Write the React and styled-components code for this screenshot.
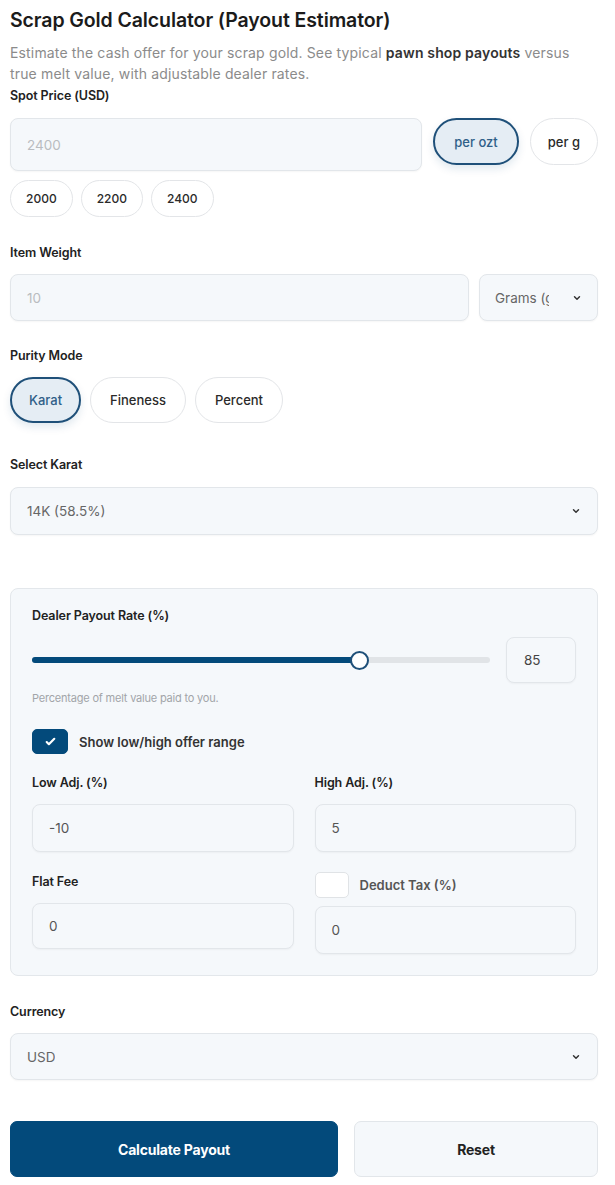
import React from "react";
import styled, { createGlobalStyle } from "styled-components";

const Global = createGlobalStyle`
  html, body { margin: 0; padding: 0; background: #fff; }
  body { font-family: Inter, "Noto Sans", Arial, sans-serif; color: #1c1c1c; }
  * { box-sizing: border-box; }
`;

const PRIMARY = "#034a7b";

const Page = styled.div`
  padding: 6px 17px 9px 10px;
  display: flex;
  flex-direction: column;
`;

const Title = styled.h1`
  margin: 0;
  font-size: 19.5px;
  line-height: 28px;
  font-weight: 600;
  color: #1b1b1b;
  letter-spacing: -0.1px;
`;

const Desc = styled.p`
  margin: 8px 0 0;
  max-width: 588px;
  font-size: 14px;
  line-height: 21px;
  color: #8b8b8b;
  letter-spacing: 0.15px;
  b { color: #333; font-weight: 600; }
`;

const Label = styled.div`
  font-size: 12.5px;
  line-height: 18px;
  font-weight: 600;
  color: #222;
  margin-top: ${(p) => p.$mt || 0}px;
  letter-spacing: -0.1px;
`;

const Row = styled.div`
  display: flex;
  align-items: flex-start;
  gap: ${(p) => p.$gap || 10}px;
  margin-top: ${(p) => p.$mt || 0}px;
`;

const Field = styled.div`
  flex: 1;
  height: ${(p) => p.$h || 48}px;
  background: #f5f8fb;
  border: 1px solid #e2e6ea;
  border-radius: 8px;
  display: flex;
  align-items: center;
  padding: 0 ${(p) => p.$px || 16}px;
  font-size: 13.5px;
  color: ${(p) => (p.$ph ? "#b9bcc0" : "#555")};
  box-shadow: 0 1px 2px rgba(0, 0, 0, 0.04);
`;

const SelectBox = styled(Field)`
  flex: ${(p) => (p.$w ? `0 0 ${p.$w}px` : 1)};
  justify-content: space-between;
  color: #666;
  overflow: hidden;
  white-space: nowrap;
`;

const SelectText = styled.span`
  overflow: hidden;
  max-width: ${(p) => (p.$clip ? `${p.$clip}px` : "none")};
`;

const Pill = styled.button`
  font-family: inherit;
  height: ${(p) => p.$h || 46}px;
  padding: 0 ${(p) => p.$px || 17}px;
  border-radius: 999px;
  font-size: ${(p) => p.$fs || 13}px;
  font-weight: 500;
  cursor: pointer;
  background: ${(p) => (p.$active ? "#e5edf4" : "#fff")};
  border: ${(p) => (p.$active ? `2px solid #1f5079` : "1px solid #e3e5e8")};
  color: ${(p) => (p.$active ? "#2f5f88" : "#2a2a2a")};
  box-shadow: ${(p) => (p.$active ? "0 4px 8px rgba(3,74,123,0.12)" : "none")};
  flex: 0 0 auto;
`;

const Chevron = () => (
  <svg width="10" height="10" viewBox="0 0 24 24" fill="none" stroke="#333" strokeWidth="3.5" strokeLinecap="round" strokeLinejoin="round">
    <path d="M6 9l6 6 6-6" />
  </svg>
);

const Panel = styled.div`
  margin-top: 53px;
  background: #f5f8fb;
  border: 1px solid #e3e7eb;
  border-radius: 8px;
  padding: 18px 21px 21px 21px;
  display: flex;
  flex-direction: column;
`;

const SliderRow = styled.div`
  display: flex;
  align-items: center;
  gap: 16px;
  margin-top: 12px;
`;

const Track = styled.div`
  position: relative;
  flex: 1;
  height: 6px;
  background: #e1e4e7;
  border-radius: 3px;
`;

const Fill = styled.div`
  height: 100%;
  background: ${PRIMARY};
  border-radius: 3px;
`;

const Thumb = styled.div`
  position: absolute;
  top: 50%;
  width: 19px;
  height: 19px;
  margin-left: -9.5px;
  margin-top: -9.5px;
  border-radius: 50%;
  background: #fff;
  border: 2px solid #1f5079;
`;

const NumBox = styled(Field)`
  flex: 0 0 70px;
  height: 46px;
  color: #444;
  padding: 0 17px;
`;

const Help = styled.div`
  margin-top: 8px;
  font-size: 11px;
  line-height: 15px;
  color: #a2a5a9;
  letter-spacing: -0.2px;
`;

const CheckRow = styled.label`
  display: flex;
  align-items: center;
  gap: 11px;
  margin-top: ${(p) => p.$mt || 0}px;
  font-size: 13px;
  font-weight: 600;
  color: ${(p) => p.$color || "#333"};
`;

const Box = styled.span`
  width: ${(p) => p.$w || 36}px;
  height: ${(p) => p.$h || 25}px;
  border-radius: 5px;
  display: inline-flex;
  align-items: center;
  justify-content: center;
  background: ${(p) => (p.$on ? PRIMARY : "#fff")};
  border: 1px solid ${(p) => (p.$on ? PRIMARY : "#e0e3e6")};
  flex: 0 0 auto;
`;

const Grid = styled.div`
  display: grid;
  grid-template-columns: 1fr 1fr;
  column-gap: 21px;
  margin-top: ${(p) => p.$mt || 0}px;
`;

const Col = styled.div`
  display: flex;
  flex-direction: column;
`;

const Buttons = styled.div`
  display: grid;
  grid-template-columns: 328px 1fr;
  gap: 16px;
  margin-top: 41px;
`;

const Btn = styled.button`
  font-family: inherit;
  height: 56px;
  border-radius: 7px;
  font-size: 14px;
  font-weight: 700;
  cursor: pointer;
  background: ${(p) => (p.$primary ? PRIMARY : "#f5f8fb")};
  color: ${(p) => (p.$primary ? "#fff" : "#222")};
  border: 1px solid ${(p) => (p.$primary ? PRIMARY : "#e2e6ea")};
  letter-spacing: -0.2px;
`;

export default function App() {
  const rate = { value: 85, min: 30, max: 107 };
  const pct = ((rate.value - rate.min) / (rate.max - rate.min)) * 100;
  return (
    <Page>
      <Global />
      <Title>Scrap Gold Calculator (Payout Estimator)</Title>
      <Desc>
        Estimate the cash offer for your scrap gold. See typical <b>pawn shop payouts</b> versus
        true melt value, with adjustable dealer rates.
      </Desc>
      <Label $mt={3}>Spot Price (USD)</Label>
      <Row $mt={13} $gap={11}>
        <Field $h={53} $ph>2400</Field>
        <Pill $active $h={47} $px={19}>per ozt</Pill>
        <Pill $h={47} $px={17}>per g</Pill>
      </Row>
      <Row $mt={9} $gap={8}>
        <Pill $h={37} $px={15} $fs={12}>2000</Pill>
        <Pill $h={37} $px={15} $fs={12}>2200</Pill>
        <Pill $h={37} $px={15} $fs={12}>2400</Pill>
      </Row>

      <Label $mt={27}>Item Weight</Label>
      <Row $mt={12} $gap={10}>
        <Field $h={47} $ph>10</Field>
        <SelectBox $h={47} $w={119} $px={15}>
          <SelectText $clip={54}>Grams (g)</SelectText>
          <Chevron />
        </SelectBox>
      </Row>

      <Label $mt={26}>Purity Mode</Label>
      <Row $mt={12} $gap={9}>
        <Pill $active $px={17}>Karat</Pill>
        <Pill $px={19}>Fineness</Pill>
        <Pill $px={19}>Percent</Pill>
      </Row>

      <Label $mt={33}>Select Karat</Label>
      <Row $mt={13}>
        <SelectBox $h={48}>
          <SelectText>14K (58.5%)</SelectText>
          <Chevron />
        </SelectBox>
      </Row>

      <Panel>
        <Label>Dealer Payout Rate (%)</Label>
        <SliderRow>
          <Track>
            <Fill style={{ width: `${pct}%` }} />
            <Thumb style={{ left: `${pct}%` }} />
          </Track>
          <NumBox>85</NumBox>
        </SliderRow>
        <Help>Percentage of melt value paid to you.</Help>
        <CheckRow $mt={23}>
          <Box $on>
            <svg width="13" height="13" viewBox="0 0 24 24" fill="none" stroke="#fff" strokeWidth="4" strokeLinecap="round" strokeLinejoin="round">
              <path d="M5 13l4 4L19 7" />
            </svg>
          </Box>
          Show low/high offer range
        </CheckRow>

        <Grid $mt={20}>
          <Col>
            <Label>Low Adj. (%)</Label>
            <Row $mt={12}>
              <Field $h={48}>-10</Field>
            </Row>
          </Col>
          <Col>
            <Label>High Adj. (%)</Label>
            <Row $mt={12}>
              <Field $h={48}>5</Field>
            </Row>
          </Col>
        </Grid>

        <Grid $mt={20}>
          <Col>
            <Label $mt={1}>Flat Fee</Label>
            <Row $mt={12}>
              <Field $h={46}>0</Field>
            </Row>
          </Col>
          <Col>
            <CheckRow $color="#555">
              <Box $w={34} $h={26} />
              Deduct Tax (%)
            </CheckRow>
            <Row $mt={8}>
              <Field $h={48}>0</Field>
            </Row>
          </Col>
        </Grid>
      </Panel>

      <Label $mt={27}>Currency</Label>
      <Row $mt={12}>
        <SelectBox $h={47}>
          <SelectText>USD</SelectText>
          <Chevron />
        </SelectBox>
      </Row>

      <Buttons>
        <Btn $primary>Calculate Payout</Btn>
        <Btn>Reset</Btn>
      </Buttons>
    </Page>
  );
}
